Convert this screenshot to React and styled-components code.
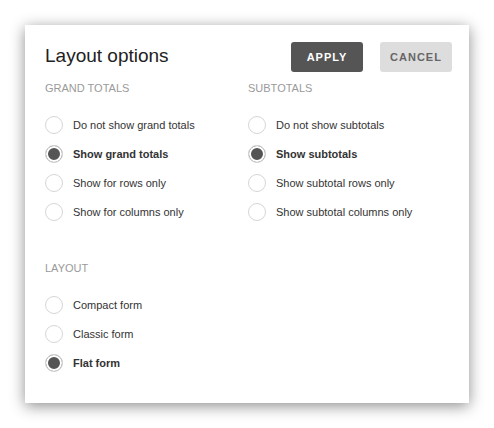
import styled, { createGlobalStyle } from 'styled-components';

const GlobalStyle = createGlobalStyle`
  body {
    margin: 0;
    background: #fff;
    font-family: "Liberation Sans", Arial, sans-serif;
  }
`;

const grandTotals = [
  'Do not show grand totals',
  'Show grand totals',
  'Show for rows only',
  'Show for columns only',
];

const subtotals = [
  'Do not show subtotals',
  'Show subtotals',
  'Show subtotal rows only',
  'Show subtotal columns only',
];

const layouts = ['Compact form', 'Classic form', 'Flat form'];

const Group = ({ title, options, selected }) => (
  <Section>
    <SectionTitle>{title}</SectionTitle>
    {options.map((label, i) => (
      <Option key={label}>
        <Radio $checked={i === selected} />
        <OptionLabel $checked={i === selected}>{label}</OptionLabel>
      </Option>
    ))}
  </Section>
);

export default function App() {
  return (
    <>
      <GlobalStyle />
      <Page>
        <Panel>
          <Header>
            <Title>Layout options</Title>
            <Buttons>
              <Button $primary>APPLY</Button>
              <Button>CANCEL</Button>
            </Buttons>
          </Header>
          <Columns>
            <Group title="GRAND TOTALS" options={grandTotals} selected={1} />
            <Group title="SUBTOTALS" options={subtotals} selected={1} />
          </Columns>
          <LayoutBlock>
            <Group title="LAYOUT" options={layouts} selected={2} />
          </LayoutBlock>
        </Panel>
      </Page>
    </>
  );
}

const Page = styled.div`
  padding: 25px;
  width: 444px;
`;

const Panel = styled.div`
  width: 444px;
  height: 378px;
  box-sizing: border-box;
  background: #fff;
  padding: 17px 17px 0 20px;
  box-shadow: 0 3px 14px rgba(0, 0, 0, 0.45);
`;

const Header = styled.div`
  display: flex;
  align-items: center;
  justify-content: space-between;
`;

const Title = styled.h1`
  margin: -2px 0 0;
  font-size: 19px;
  font-weight: 400;
  color: #222;
  line-height: 24px;
`;

const Buttons = styled.div`
  display: flex;
  gap: 17px;
`;

const Button = styled.button`
  width: 72px;
  height: 30px;
  border: none;
  border-radius: 3px;
  font-family: "Liberation Sans", Arial, sans-serif;
  font-size: 11px;
  font-weight: 700;
  letter-spacing: 1px;
  color: ${(p) => (p.$primary ? '#fff' : '#666')};
  background: ${(p) => (p.$primary ? '#555' : '#ddd')};
  padding: 0;
`;

const Columns = styled.div`
  display: grid;
  grid-template-columns: 203px 1fr;
  margin-top: 10px;
`;

const LayoutBlock = styled.div`
  margin-top: 36px;
`;

const Section = styled.div`
  display: flex;
  flex-direction: column;
`;

const SectionTitle = styled.div`
  font-size: 11px;
  line-height: 13px;
  color: #9a9a9a;
  margin-bottom: 15px;
`;

const Option = styled.div`
  display: flex;
  align-items: center;
  gap: 10px;
  height: 29px;
`;

const Radio = styled.span`
  width: 18px;
  height: 18px;
  box-sizing: border-box;
  border-radius: 50%;
  border: 1px solid #d6d6d6;
  background: ${(p) => (p.$checked ? '#555' : '#fff')};
  box-shadow: ${(p) => (p.$checked ? 'inset 0 0 0 2px #fff' : 'none')};
  flex: none;
`;

const OptionLabel = styled.span`
  font-size: 11px;
  color: #333;
  font-weight: ${(p) => (p.$checked ? 700 : 400)};
`;
